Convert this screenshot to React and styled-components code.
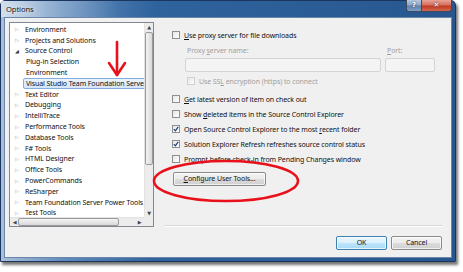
import React from 'react';
import styled, { createGlobalStyle } from 'styled-components';

const GlobalStyle = createGlobalStyle`
  html, body {
    margin: 0;
    padding: 0;
    background: #ffffff;
  }
  body {
    font-family: "Noto Sans", "Open Sans", sans-serif;
    letter-spacing: -0.1px;
  }
`;

const Stage = styled.div`
  position: relative;
  width: 463px;
  height: 272px;
  overflow: hidden;
`;

const Window = styled.div`
  width: 456px;
  height: 262px;
  box-sizing: border-box;
  display: flex;
  flex-direction: column;
  border: 1px solid #1b355e;
  border-radius: 5px 5px 0 0;
  background: linear-gradient(90deg, #a9c0da 0%, #5f8abb 14%, #2f639c 34%, #28578f 100%);
  box-shadow: 2px 3px 3px rgba(0, 0, 0, 0.55);
  padding: 0 3px 3px 3px;
`;

const TitleBar = styled.div`
  height: 16px;
  flex: none;
  display: flex;
  justify-content: space-between;
  align-items: flex-start;
  margin: 0 -3px;
  padding-left: 5px;
  background: linear-gradient(90deg, rgba(214, 226, 239, 0.9) 0%, rgba(190, 208, 228, 0.5) 10%, rgba(80, 125, 178, 0) 26%);
`;

const Title = styled.span`
  font-size: 7.6px;
  line-height: 17px;
  color: #1a1a1a;
  text-shadow: 0 0 4px rgba(255, 255, 255, 0.9);
`;

const Captions = styled.div`
  display: flex;
  margin-right: 3px;
  margin-top: -1px;
`;

const CaptionButton = styled.div`
  width: ${p => p.$w}px;
  height: 12px;
  box-sizing: border-box;
  border: 1px solid #3b4a5c;
  border-top: none;
  border-left: ${p => (p.$first ? '1px solid #3b4a5c' : 'none')};
  border-radius: ${p => (p.$first ? '0 0 0 3px' : '0 0 3px 0')};
  background: ${p =>
    p.$close
      ? 'linear-gradient(180deg, #e8a497 0%, #d4705e 45%, #c23a22 55%, #d0674f 100%)'
      : 'linear-gradient(180deg, #b8cbe0 0%, #8aa8ca 45%, #5f82ac 55%, #7ea0c6 100%)'};
  color: #ffffff;
  font-family: "DejaVu Sans", sans-serif;
  font-weight: bold;
  font-size: 7px;
  line-height: 11px;
  text-align: center;
  text-shadow: 0 0 2px #223;
`;

const Client = styled.div`
  flex: 1;
  background: #f0f0f0;
  border: 1px solid #6b86a8;
  display: flex;
  flex-direction: column;
  padding: 4px 9px 0 4px;
`;

const Main = styled.div`
  display: flex;
  height: 205px;
`;

const Tree = styled.div`
  width: 145px;
  flex: none;
  box-sizing: border-box;
  border: 1px solid #828790;
  background: #ffffff;
  display: grid;
  grid-template-columns: 1fr 9px;
  grid-template-rows: 1fr 9px;
  overflow: hidden;
`;

const TreeList = styled.div`
  overflow: hidden;
  padding-top: 1px;
`;

const Row = styled.div`
  height: 10.8px;
  display: flex;
  align-items: center;
  padding-left: ${p => 5 + p.$level * 11}px;
  font-size: 7px;
  color: #111;
  white-space: nowrap;
`;

const Expander = styled.span`
  width: 10px;
  flex: none;
  font-size: 5px;
  color: ${p => (p.$open ? '#333' : '#a0a0a0')};
  font-family: "DejaVu Sans", sans-serif;
`;

const Label = styled.span`
  padding: 0 2px;
  line-height: 9px;
  border: 1px solid ${p => (p.$selected ? '#84acdd' : 'transparent')};
  background: ${p => (p.$selected ? 'linear-gradient(180deg, #eaf3fd, #d6e6f8)' : 'transparent')};
  border-radius: 2px;
  margin-left: -3px;
`;

const VScroll = styled.div`
  grid-row: 1;
  grid-column: 2;
  background: #ececec;
  border-left: 1px solid #e2e2e2;
  display: flex;
  flex-direction: column;
  align-items: center;
`;

const HScroll = styled.div`
  grid-row: 2;
  grid-column: 1;
  background: #ececec;
  border-top: 1px solid #e2e2e2;
  display: flex;
  align-items: center;
`;

const Corner = styled.div`
  grid-row: 2;
  grid-column: 2;
  background: #ececec;
`;

const Arrow = styled.span`
  font-size: 5px;
  color: #444;
  font-family: "DejaVu Sans", sans-serif;
  flex: none;
  width: 9px;
  text-align: center;
  line-height: 8px;
`;

const Thumb = styled.div`
  box-sizing: border-box;
  border: 1px solid #9a9a9a;
  border-radius: 2px;
  background: linear-gradient(${p => (p.$vertical ? '90deg' : '180deg')}, #f4f4f4, #d8d8d8);
  ${p =>
    p.$vertical
      ? 'width: 8px; height: 133px; margin-top: 1px;'
      : 'height: 8px; width: 101px; margin-left: -1px;'}
`;

const Grow = styled.div`
  flex: 1;
`;

const Panel = styled.div`
  flex: 1;
  display: flex;
  flex-direction: column;
  padding-left: 11px;
`;

const Options = styled.div`
  flex: 1;
  padding-left: 7px;
  font-size: 7px;
  color: #111;
`;

const CheckRow = styled.div`
  display: flex;
  align-items: center;
  height: 12px;
  margin-top: ${p => p.$mt}px;
  margin-left: ${p => p.$indent || 0}px;
  color: ${p => (p.$disabled ? '#a0a0a0' : '#111')};
  white-space: nowrap;
`;

const Box = styled.span`
  width: 8px;
  height: 8px;
  flex: none;
  box-sizing: border-box;
  border: 1px solid ${p => (p.$disabled ? '#cfcfcf' : '#8f8f8f')};
  background: linear-gradient(135deg, #e6e6e6, #ffffff);
  margin-right: 4px;
  display: flex;
  align-items: center;
  justify-content: center;
`;

const Fields = styled.div`
  display: flex;
  gap: 4px;
  margin: 4px 0 0 13px;
`;

const Field = styled.div`
  display: flex;
  flex-direction: column;
  gap: 2px;
  width: ${p => p.$w}px;
`;

const FieldLabel = styled.span`
  color: #a0a0a0;
  height: 11px;
  line-height: 11px;
  padding-left: 2px;
`;

const TextBox = styled.div`
  height: 14px;
  box-sizing: border-box;
  border: 1px solid #d4d4d4;
  border-radius: 2px;
  background: #f4f4f4;
`;

const Button = styled.div`
  width: ${p => p.$w}px;
  height: 14px;
  box-sizing: border-box;
  border: 1px solid ${p => (p.$default ? '#3c7fb1' : '#8a8a8a')};
  border-radius: 2px;
  background: ${p =>
    p.$default
      ? 'linear-gradient(180deg, #eaf6fd 0%, #d9f0fc 50%, #bee6fd 51%, #a7d9f5 100%)'
      : 'linear-gradient(180deg, #f2f2f2 0%, #ebebeb 50%, #dddddd 51%, #cfcfcf 100%)'};
  box-shadow: inset 0 0 0 1px rgba(255, 255, 255, 0.7);
  font-size: 7px;
  line-height: 12px;
  text-align: center;
  white-space: nowrap;
  color: #111;
  margin-top: ${p => p.$mt || 0}px;
  margin-left: ${p => p.$ml || 0}px;
`;

const Separator = styled.div`
  height: 1px;
  background: #d5d5d5;
  border-bottom: 1px solid #ffffff;
`;

const Footer = styled.div`
  display: flex;
  justify-content: flex-end;
  gap: 4px;
  margin-top: 9px;
`;

const Overlay = styled.svg`
  position: absolute;
  left: 0;
  top: 0;
  pointer-events: none;
`;

const treeItems = [
  { text: 'Environment', level: 0 },
  { text: 'Projects and Solutions', level: 0 },
  { text: 'Source Control', level: 0, open: true },
  { text: 'Plug-in Selection', level: 1 },
  { text: 'Environment', level: 1 },
  { text: 'Visual Studio Team Foundation Server', level: 1, selected: true },
  { text: 'Text Editor', level: 0 },
  { text: 'Debugging', level: 0 },
  { text: 'IntelliTrace', level: 0 },
  { text: 'Performance Tools', level: 0 },
  { text: 'Database Tools', level: 0 },
  { text: 'F# Tools', level: 0 },
  { text: 'HTML Designer', level: 0 },
  { text: 'Office Tools', level: 0 },
  { text: 'PowerCommands', level: 0 },
  { text: 'ReSharper', level: 0 },
  { text: 'Team Foundation Server Power Tools', level: 0 },
  { text: 'Test Tools', level: 0 },
];

const Check = () => (
  <svg width="6" height="6" viewBox="0 0 6 6">
    <path d="M0.8 3.2 L2.4 4.8 L5.2 0.8" fill="none" stroke="#1e3d78" strokeWidth="1.2" />
  </svg>
);

const Option = ({ checked, disabled, mt, indent, children }) => (
  <CheckRow $mt={mt} $indent={indent} $disabled={disabled}>
    <Box $disabled={disabled}>{checked && <Check />}</Box>
    <span>{children}</span>
  </CheckRow>
);

export default function App() {
  return (
    <Stage>
      <GlobalStyle />
      <Window>
        <TitleBar>
          <Title>Options</Title>
          <Captions>
            <CaptionButton $w={16} $first>?</CaptionButton>
            <CaptionButton $w={30} $close>✕</CaptionButton>
          </Captions>
        </TitleBar>
        <Client>
          <Main>
            <Tree>
              <TreeList>
                {treeItems.map((item, i) => (
                  <Row key={i} $level={item.level}>
                    {item.level === 0 && <Expander $open={item.open}>{item.open ? '◢' : '▷'}</Expander>}
                    {item.level === 0 ? (
                      <span>{item.text}</span>
                    ) : (
                      <Label $selected={item.selected}>{item.text}</Label>
                    )}
                  </Row>
                ))}
              </TreeList>
              <VScroll>
                <Arrow>▲</Arrow>
                <Thumb $vertical />
                <Grow />
                <Arrow>▼</Arrow>
              </VScroll>
              <HScroll>
                <Arrow>◀</Arrow>
                <Thumb />
                <Grow />
                <Arrow>▶</Arrow>
              </HScroll>
              <Corner />
            </Tree>
            <Panel>
              <Options>
                <Option mt={7}><u>U</u>se proxy server for file downloads</Option>
                <Fields>
                  <Field $w={196}>
                    <FieldLabel>Proxy <u>s</u>erver name:</FieldLabel>
                    <TextBox />
                  </Field>
                  <Field $w={50}>
                    <FieldLabel><u>P</u>ort:</FieldLabel>
                    <TextBox />
                  </Field>
                </Fields>
                <Option mt={3} indent={15} disabled>Use SS<u>L</u> encryption (https) to connect</Option>
                <Option mt={6}><u>G</u>et latest version of item on check out</Option>
                <Option mt={3}>Show <u>d</u>eleted items in the Source Control Explorer</Option>
                <Option mt={3} checked>Open Source Control Explorer to the most <u>r</u>ecent folder</Option>
                <Option mt={3} checked>Solution Explorer Refresh refreshes source control status</Option>
                <Option mt={3}>Prompt before check-in from Pending Changes window</Option>
                <Button $w={93} $mt={7} $ml={1}><u>C</u>onfigure User Tools...</Button>
              </Options>
              <Separator />
            </Panel>
          </Main>
          <Footer>
            <Button $w={51} $default>OK</Button>
            <Button $w={51}>Cancel</Button>
          </Footer>
        </Client>
      </Window>
      <Overlay width="463" height="272" viewBox="0 0 463 272">
        <g fill="none" stroke="#e8101a" strokeWidth="2.6" strokeLinecap="round" strokeLinejoin="round">
          <path d="M117 42 L117 75" />
          <path d="M109 63 L117 75 L125 63" />
          <ellipse cx="226" cy="181" rx="72" ry="20" />
        </g>
      </Overlay>
    </Stage>
  );
}
